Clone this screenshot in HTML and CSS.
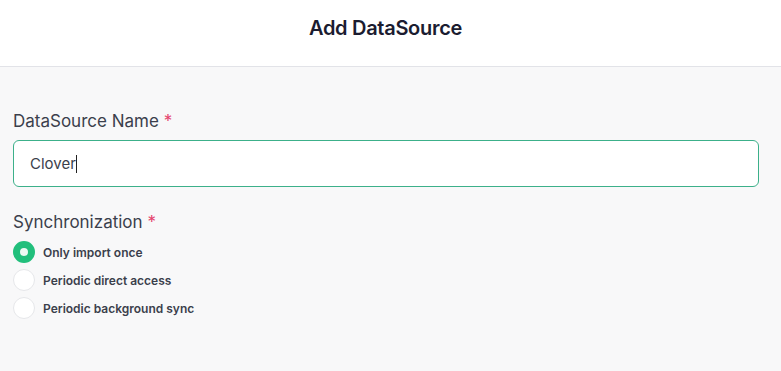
FILE: index.html
```html
<!DOCTYPE html>
<html>

<head>
  <meta charset="UTF-8">
  <link rel="stylesheet" href="styles.css">
  <title>Add DataSource</title>
</head>

<body>
<div class="header">
  <h1>Add DataSource</h1>
</div>
<div class="content">
  <div class="field">
    <label class="field-label">DataSource Name <span class="required">*</span></label>
    <div class="text-input">Clover<span class="caret"></span></div>
  </div>
  <div class="field">
    <label class="field-label">Synchronization <span class="required">*</span></label>
    <div class="radio-list">
      <div class="radio-item">
        <span class="radio radio-checked"></span>
        <span>Only import once</span>
      </div>
      <div class="radio-item">
        <span class="radio"></span>
        <span>Periodic direct access</span>
      </div>
      <div class="radio-item">
        <span class="radio"></span>
        <span>Periodic background sync</span>
      </div>
    </div>
  </div>
</div>
</body>
</html>
```

FILE: styles.css
```css
body {
    font-family: Inter, 'Noto Sans', sans-serif;
    background-color: #f8f8f9;
    margin: 0;
    padding: 0;
    height: 100vh;
}

.header {
    background-color: #fff;
    border-bottom: 1px solid #e2e3e8;
    height: 66px;
    display: flex;
    align-items: center;
    justify-content: center;
}

.header h1 {
    margin: 0;
    font-size: 20px;
    font-weight: 600;
    color: #1b1c30;
    letter-spacing: -0.3px;
    padding-bottom: 10px;
    padding-right: 10px;
}

.content {
    padding: 43px 22px 0 13px;
}

.field {
    margin-bottom: 24px;
}

.field-label {
    display: block;
    font-size: 17px;
    color: #3b3f4c;
    margin-bottom: 8px;
    line-height: 22px;
}

.required {
    color: #e5436d;
}

.text-input {
    background: #fff;
    border: 1px solid #3cb08a;
    border-radius: 6px;
    height: 45px;
    display: flex;
    align-items: center;
    padding-left: 16px;
    font-size: 15px;
    color: #3b3f4c;
}

.caret {
    display: inline-block;
    width: 1px;
    height: 18px;
    background: #222;
}

.radio-list {
    display: flex;
    flex-direction: column;
    gap: 6px;
    margin-top: 1px;
}

.radio-item {
    display: flex;
    align-items: center;
    gap: 8px;
    font-size: 12px;
    font-weight: 600;
    color: #3b3f4c;
    height: 22px;
}

.radio {
    width: 20px;
    height: 20px;
    border-radius: 50%;
    border: 1px solid #e6e7ea;
    background: #fff;
    box-sizing: content-box;
}

.radio-checked {
    width: 8px;
    height: 8px;
    border: 7px solid #22bf7c;
    background: #eef9f4;
}
```
